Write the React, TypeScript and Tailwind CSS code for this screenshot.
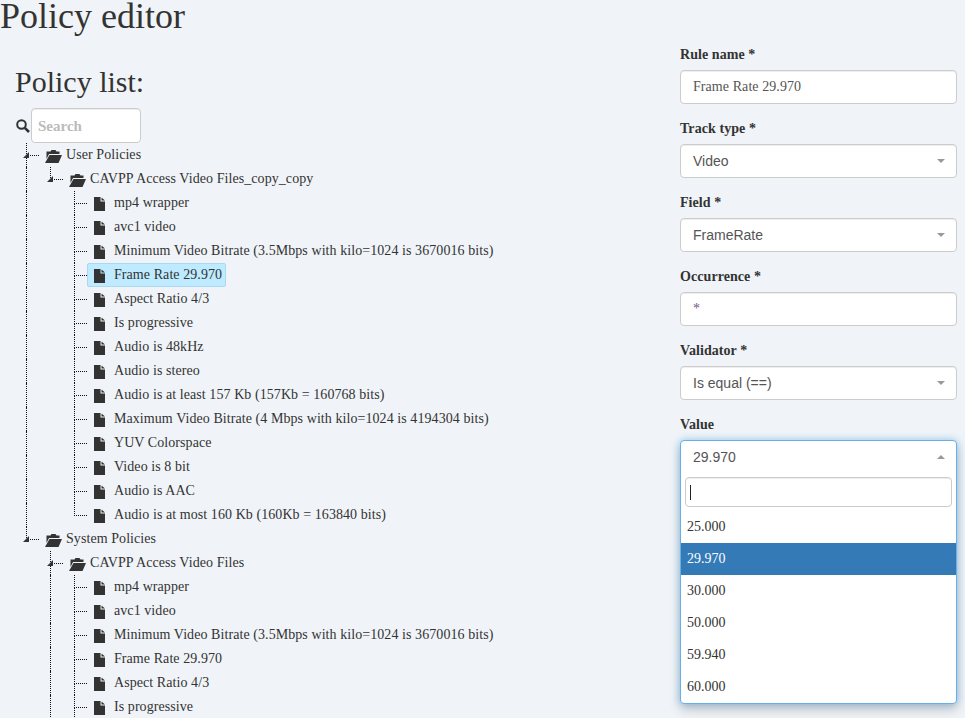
import React from "react";

type Guide = 0 | 1;
type RowT = { label: string; guides: Guide[]; folder?: boolean; cont?: boolean; tri?: boolean; selected?: boolean };

function FileIcon() {
  return (
    <svg width="11" height="14" viewBox="0 0 11 14" className="mt-[2px] shrink-0 text-[#333]" fill="currentColor">
      <path d="M0 0h6.5v4.5H11V14H0z" />
      <path d="M7.5 0.5 11 3.5H7.5z" />
    </svg>
  );
}

function FolderIcon() {
  return (
    <svg width="17" height="13" viewBox="0 0 17 13" className="mt-[2px] shrink-0 text-[#333]" fill="currentColor">
      <path d="M1.5 1.5h4l1-1.5h4l1 1.5H14.5V4H4L1.5 9z" />
      <path d="M4.5 5H17l-3.5 8H0z" />
    </svg>
  );
}

function SearchIcon() {
  return (
    <svg width="14" height="14" viewBox="0 0 14 14" fill="none" stroke="#333" strokeWidth="2" className="shrink-0">
      <circle cx="5.5" cy="5.5" r="4.3" />
      <path d="M8.8 8.8 13 13" strokeWidth="2.6" />
    </svg>
  );
}

function Caret({ up }: { up?: boolean }) {
  return (
    <svg width="8" height="4" viewBox="0 0 8 4" fill="#999" className="shrink-0">
      <path d={up ? "M0 4 4 0l4 4z" : "M0 0h8L4 4z"} />
    </svg>
  );
}

function Row({ r }: { r: RowT }) {
  return (
    <div className="flex h-6 items-stretch">
      {r.guides.map((g, i) => (
        <div key={i} className={g ? "w-6 shrink-0 border-l border-dotted border-[#111]" : "w-6 shrink-0"} />
      ))}
      <div className="relative w-[13px] shrink-0">
        <div className="h-[13px] border-b border-l border-dotted border-[#111]" />
        {r.cont && <div className="h-[11px] border-l border-dotted border-[#111]" />}
        {r.tri && (
          <svg width="7" height="6" viewBox="0 0 7 6" fill="#333" className="absolute left-[-3px] top-[9px]">
            <path d="M6 0v6H0z" />
          </svg>
        )}
      </div>
      <div
        className={
          "flex h-6 items-center whitespace-nowrap rounded-[2px] border pr-[3px] " +
          (r.folder ? "pl-[5px] " : "pl-[6px] ") +
          (r.selected ? "border-[#a9d8f0] bg-[#beebff]" : "border-transparent")
        }
      >
        {r.folder ? <FolderIcon /> : <FileIcon />}
        <span className={"text-sm tracking-[0.07px] " + (r.folder ? "ml-[4px]" : "ml-[9px]")}>{r.label}</span>
      </div>
    </div>
  );
}

const userLeaves = [
  "mp4 wrapper",
  "avc1 video",
  "Minimum Video Bitrate (3.5Mbps with kilo=1024 is 3670016 bits)",
  "Frame Rate 29.970",
  "Aspect Ratio 4/3",
  "Is progressive",
  "Audio is 48kHz",
  "Audio is stereo",
  "Audio is at least 157 Kb (157Kb = 160768 bits)",
  "Maximum Video Bitrate (4 Mbps with kilo=1024 is 4194304 bits)",
  "YUV Colorspace",
  "Video is 8 bit",
  "Audio is AAC",
  "Audio is at most 160 Kb (160Kb = 163840 bits)",
];

const rows: RowT[] = [
  { label: "User Policies", guides: [], folder: true, cont: true, tri: true },
  { label: "CAVPP Access Video Files_copy_copy", guides: [1], folder: true, tri: true },
  ...userLeaves.map((label, i) => ({
    label,
    guides: [1, 0] as Guide[],
    cont: i < userLeaves.length - 1,
    selected: label === "Frame Rate 29.970",
  })),
  { label: "System Policies", guides: [], folder: true, tri: true },
  { label: "CAVPP Access Video Files", guides: [0], folder: true, cont: true, tri: true },
  ...userLeaves.slice(0, 6).map((label) => ({ label, guides: [0, 1] as Guide[], cont: true })),
];

const control =
  "flex h-[34px] w-full items-center justify-between rounded border border-[#ccc] bg-white pl-3 pr-[11px] text-sm text-[#555] shadow-[inset_0_1px_1px_rgba(0,0,0,0.075)]";

function Field({ label, children }: { label: string; children: React.ReactNode }) {
  return (
    <div className="mb-[15px]">
      <div className="mb-[5px] h-5 text-sm font-bold leading-5 tracking-[0.07px]">{label}</div>
      {children}
    </div>
  );
}

function SelectBox({ value }: { value: string }) {
  return (
    <div className={control}>
      <span className="font-['Liberation_Sans',sans-serif]">{value}</span>
      <Caret />
    </div>
  );
}

const options = ["25.000", "29.970", "30.000", "50.000", "59.940", "60.000"];

export default function App() {
  return (
    <div className="h-[718px] w-[965px] overflow-hidden bg-[#f0f4f8] font-['Liberation_Serif',serif] text-[#333]">
      <div className="flex items-start">
        <div className="min-w-0 flex-1">
          <h1 className="h-[32px] text-[36px] font-normal leading-[32px]">Policy editor</h1>
          <h2 className="ml-[15px] mt-[33px] h-[33px] text-[30px] font-normal leading-[33px]">Policy list:</h2>
          <div className="ml-4 mt-[10px] flex items-center">
            <SearchIcon />
            <input
              readOnly
              placeholder="Search"
              className="ml-px h-[35px] w-[110px] rounded border border-[#ccc] bg-white px-[6px] pt-[2px] text-[15px] font-bold shadow-[inset_0_1px_1px_rgba(0,0,0,0.075)] outline-none placeholder:text-[#bbb]"
            />
          </div>
          <div className="ml-[26px]">
            {rows.map((r, i) => (
              <Row key={i} r={r} />
            ))}
          </div>
        </div>
        <div className="mr-2 w-[277px] shrink-0 pt-[45px]">
          <Field label="Rule name *">
            <div className={control}>
              <span className="tracking-[0.07px]">Frame Rate 29.970</span>
            </div>
          </Field>
          <Field label="Track type *">
            <SelectBox value="Video" />
          </Field>
          <Field label="Field *">
            <SelectBox value="FrameRate" />
          </Field>
          <Field label="Occurrence *">
            <div className={control}>
              <span className="text-[#6f5a85]">*</span>
            </div>
          </Field>
          <Field label="Validator *">
            <SelectBox value="Is equal (==)" />
          </Field>
          <Field label="Value">
            <div className="h-[264px] overflow-hidden rounded border border-[#66afe9] bg-white shadow-[0_6px_12px_rgba(0,0,0,0.175),0_0_8px_rgba(102,175,233,0.6)]">
              <div className="flex h-8 items-center justify-between pl-3 pr-[11px] text-sm text-[#555]">
                <span className="font-['Liberation_Sans',sans-serif]">29.970</span>
                <Caret up />
              </div>
              <div className="px-1 pt-1">
                <div className="flex h-[30px] items-center rounded border border-[#ccc] bg-white pl-[4px] shadow-[inset_0_1px_1px_rgba(0,0,0,0.075)]">
                  <div className="h-[15px] w-px bg-[#222]" />
                </div>
              </div>
              <div className="mt-[4px] text-sm">
                {options.map((o) => (
                  <div
                    key={o}
                    className={
                      "flex h-8 items-center px-[6px] " + (o === "29.970" ? "bg-[#337ab7] text-white" : "text-[#333]")
                    }
                  >
                    {o}
                  </div>
                ))}
              </div>
            </div>
          </Field>
        </div>
      </div>
    </div>
  );
}
